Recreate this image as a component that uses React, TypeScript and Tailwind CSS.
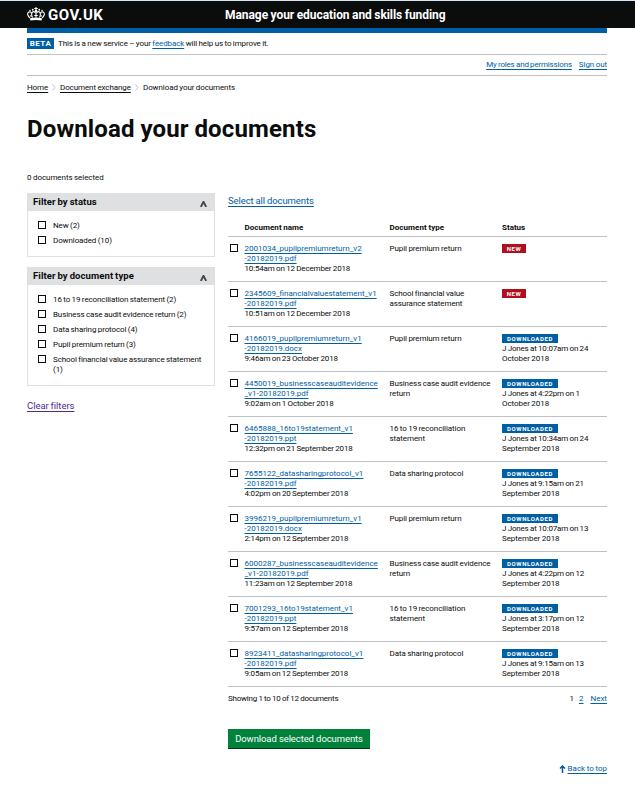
import React from "react";

const LINK = "text-[#005ea5] underline decoration-1 underline-offset-[1.5px]";

type Doc = {
  name: [string, string];
  time: string;
  type: string[];
  by?: [string, string];
};

const DOCS: Doc[] = [
  { name: ["2001034_pupilpremiumreturn_v2", "-20182019.pdf"], time: "10:54am on 12 December 2018", type: ["Pupil premium return"] },
  { name: ["2345609_financialvaluestatement_v1", "-20182019.pdf"], time: "10:51am on 12 December 2018", type: ["School financial value", "assurance statement"] },
  { name: ["4166019_pupilpremiumreturn_v1", "-20182019.docx"], time: "9:46am on 23 October 2018", type: ["Pupil premium return"], by: ["J Jones at 10:07am on 24", "October 2018"] },
  { name: ["4450019_businesscaseauditevidence", "_v1-20182019.pdf"], time: "9:02am on 1 October 2018", type: ["Business case audit evidence", "return"], by: ["J Jones at 4:22pm on 1", "October 2018"] },
  { name: ["6465888_16to19statement_v1", "-20182019.ppt"], time: "12:32pm on 21 September 2018", type: ["16 to 19 reconciliation", "statement"], by: ["J Jones at 10:34am on 24", "September 2018"] },
  { name: ["7655122_datasharingprotocol_v1", "-20182019.pdf"], time: "4:02pm on 20 September 2018", type: ["Data sharing protocol"], by: ["J Jones at 9:15am on 21", "September 2018"] },
  { name: ["3996219_pupilpremiumreturn_v1", "-20182019.docx"], time: "2:14pm on 12 September 2018", type: ["Pupil premium return"], by: ["J Jones at 10:07am on 13", "September 2018"] },
  { name: ["6000287_businesscaseauditevidence", "_v1-20182019.pdf"], time: "11:23am on 12 September 2018", type: ["Business case audit evidence", "return"], by: ["J Jones at 4:22pm on 12", "September 2018"] },
  { name: ["7001293_16to19statement_v1", "-20182019.ppt"], time: "9:57am on 12 September 2018", type: ["16 to 19 reconciliation", "statement"], by: ["J Jones at 3:17pm on 12", "September 2018"] },
  { name: ["8923411_datasharingprotocol_v1", "-20182019.pdf"], time: "9:05am on 12 September 2018", type: ["Data sharing protocol"], by: ["J Jones at 9:15am on 13", "September 2018"] },
];

function Crown() {
  return (
    <svg className="-mt-px h-[14px] w-[18px] shrink-0" viewBox="0 0 36 28" fill="#fff">
      <path d="M17 0h2v2h2.500v2H19v2h-2V4h-2.500V2H17z" />
      <circle cx="18" cy="8" r="2.600" />
      <circle cx="11.500" cy="5.500" r="1.800" />
      <circle cx="24.500" cy="5.500" r="1.800" />
      <circle cx="6" cy="7" r="1.500" />
      <circle cx="30" cy="7" r="1.500" />
      <g fill="none" stroke="#fff" strokeWidth="2.200">
        <path d="M6 22C1 18 0 12.500 3 10.500s6 0 6 3" />
        <path d="M30 22c5-4 6-9.500 3-11.500s-6 0-6 3" />
        <path d="M11 21C8.500 16 8.500 11 12 9.500c2.500-.8 4.500.8 5 3" />
        <path d="M25 21c2.500-5 2.500-10-1-11.500-2.500-.8-4.500.8-5 3" />
        <path d="M18 12v9M14.500 17h7" />
        <path d="M6 17.500l3.500 1M30 17.500l-3.500 1" />
      </g>
      <path d="M6 22.500c8-2 16-2 24 0l-.8 4.500c-7.500-1.500-15-1.500-22.400 0z" />
    </svg>
  );
}

function Chevron() {
  return (
    <svg className="h-[7px] w-[4px] shrink-0" viewBox="0 0 4 7" fill="none" stroke="#bfc1c3" strokeWidth="1">
      <path d="M0.500 0.500 3 3.500 0.500 6.500" />
    </svg>
  );
}

function Box() {
  return <span className="block size-2 shrink-0 border border-[#0b0c0c] bg-white" />;
}

function Filter({ title, items }: { title: string; items: string[][] }) {
  return (
    <section className="border border-[#dee0e2]">
      <h2 className="flex h-[17px] items-center justify-between bg-[#dee0e2] pr-[7px] pl-[5px] text-[9.5px] font-bold">
        <span className="tracking-[0.08px] [word-spacing:-0.5px]">{title}</span>
        <svg className="mt-[2px] h-[6px] w-[7px]" viewBox="0 0 7 6" fill="none" stroke="#41464a" strokeWidth="1.9">
          <path d="M0.800 6 3.500 0.800 6.200 6" />
        </svg>
      </h2>
      <div className="flex flex-col gap-[5px] px-[10px] pt-[10px] pb-[10px] text-[8px] leading-[10px] tracking-[-0.11px]">
        {items.map((lines) => (
          <label key={lines[0]} className="flex gap-[7px]">
            <Box />
            <span className="whitespace-nowrap">
              {lines.map((l) => (
                <span key={l} className="block">{l}</span>
              ))}
            </span>
          </label>
        ))}
      </div>
    </section>
  );
}

function Row({ doc }: { doc: Doc }) {
  return (
    <div className="flex h-[45px] border-b border-[#bfc1c3] pt-[7px] text-[8px] leading-[10px] whitespace-nowrap">
      <div className="w-[16.500px] shrink-0 pl-[2px]">
        <Box />
      </div>
      <div className="w-[145px] shrink-0">
        <a className={LINK}>
          {doc.name[0]}
          <br />
          {doc.name[1]}
        </a>
        <div className="tracking-[-0.16px]">{doc.time}</div>
      </div>
      <div className="w-[112.500px] shrink-0 tracking-[-0.09px]">
        {doc.type.map((t) => (
          <div key={t}>{t}</div>
        ))}
      </div>
      <div>
        {doc.by ? (
          <>
            <div className="mb-px flex h-[9px] w-[56px] items-center justify-center bg-[#005ea5] text-[6px] leading-[9px] font-bold tracking-[0.6px] text-white">DOWNLOADED</div>
            <div className="tracking-[-0.17px]">{doc.by[0]}</div>
            <div className="tracking-[-0.06px]">{doc.by[1]}</div>
          </>
        ) : (
          <div className="flex h-[9px] w-[24px] items-center justify-center bg-[#b10e1e] text-[6px] leading-[9px] font-bold tracking-[0.6px] text-white">NEW</div>
        )}
      </div>
    </div>
  );
}

export default function App() {
  return (
    <div className="h-[799px] w-[635px] overflow-hidden bg-white font-[Roboto,sans-serif] text-[#0b0c0c] [word-spacing:-0.4px]">
      <header className="flex h-7 items-center border-t border-[#d5e8f3] bg-[#0b0c0c] pl-[27px] text-white">
        <Crown />
        <span className="mt-[2px] ml-[3px] w-[177px] text-[15px] leading-none font-bold tracking-[0.5px]">GOV.UK</span>
        <span className="text-[12px] font-bold tracking-[-0.06px] whitespace-nowrap">Manage your education and skills funding</span>
      </header>
      <main className="mx-[27px] w-[580px]">
        <div className="h-[5px] bg-[#005ea5]" />
        <div className="flex h-[22px] items-center border-b border-[#bfc1c3] text-[8px]">
          <span className="flex h-[11px] w-[27px] items-center justify-center bg-[#005ea5] text-[8px] font-bold tracking-[0.5px] text-white">BETA</span>
          <span className="ml-[4px] tracking-[-0.11px] whitespace-nowrap">
            This is a new service – your <a className={LINK}>feedback</a> will help us to improve it.
          </span>
        </div>
        <nav className="flex h-[21px] items-center justify-end gap-[7px] border-b border-[#bfc1c3] text-[8px]">
          <a className={LINK + " tracking-[-0.18px]"}>My roles and permissions</a>
          <a className={LINK + " tracking-[-0.08px]"}>Sign out</a>
        </nav>
        <nav className="mt-[6px] flex h-[11px] items-center text-[8px] whitespace-nowrap">
          <span className="flex w-[33px] shrink-0 items-center justify-between pr-[4px]">
            <a className="tracking-[-0.1px] underline underline-offset-[1.500px]">Home</a>
            <Chevron />
          </span>
          <span className="flex w-[83px] shrink-0 items-center justify-between pr-[4px]">
            <a className="tracking-[-0.1px] underline underline-offset-[1.500px]">Document exchange</a>
            <Chevron />
          </span>
          <span className="tracking-[-0.1px]">Download your documents</span>
        </nav>
        <h1 className="mt-[21px] text-[24px] leading-[30px] font-bold tracking-[0.15px] whitespace-nowrap">Download your documents</h1>
        <p className="mt-[29px] text-[8px] leading-[10px] tracking-[-0.06px]">0 documents selected</p>
        <div className="mt-[10px] flex">
          <aside className="w-[188px] shrink-0">
            <Filter title="Filter by status" items={[["New (2)"], ["Downloaded (10)"]]} />
            <div className="h-[10px]" />
            <Filter
              title="Filter by document type"
              items={[["16 to 19 reconciliation statement (2)"], ["Business case audit evidence return (2)"], ["Data sharing protocol (4)"], ["Pupil premium return (3)"], ["School financial value assurance statement", "(1)"]]}
            />
            <a className="mt-[14px] block text-[9.500px] leading-[12px] tracking-[-0.05px] text-[#4c2c92] underline underline-offset-[1.500px]">Clear filters</a>
          </aside>
          <section className="ml-[13px] w-[379px]">
            <a className={LINK + " mt-[2px] block text-[9.500px] leading-[12px] tracking-[-0.08px]"}>Select all documents</a>
            <div className="mt-[10px] flex h-[20px] items-center border-b border-[#bfc1c3] pt-[2px] pl-[16.500px] text-[8px] font-bold">
              <span className="w-[145px] tracking-[0.04px]">Document name</span>
              <span className="w-[112.500px] tracking-[0.06px]">Document type</span>
              <span>Status</span>
            </div>
            {DOCS.map((d) => (
              <Row key={d.name[0]} doc={d} />
            ))}
            <div className="mt-[7px] flex justify-between text-[8px] leading-[10px]">
              <span className="tracking-[-0.22px]">Showing 1 to 10 of 12 documents</span>
              <span className="flex">
                <span className="mr-[5px]">1</span>
                <a className={LINK + " mr-[7px]"}>2</a>
                <a className={LINK}>Next</a>
              </span>
            </div>
            <button className="mt-[25px] flex h-[20px] w-[142px] items-center justify-center border-b border-[#003618] bg-[#00823b] pt-px text-[9.500px] tracking-[-0.1px] text-white">Download selected documents</button>
            <div className="mt-[15px] flex items-center justify-end gap-[2px] text-[8px] leading-[10px]">
              <svg className="h-[8px] w-[7px]" viewBox="0 0 7 8" fill="none" stroke="#005ea5" strokeWidth="1.500">
                <path d="M3.500 8V1M1 3.600 3.500 1 6 3.600" />
              </svg>
              <a className={LINK}>Back to top</a>
            </div>
          </section>
        </div>
      </main>
    </div>
  );
}
